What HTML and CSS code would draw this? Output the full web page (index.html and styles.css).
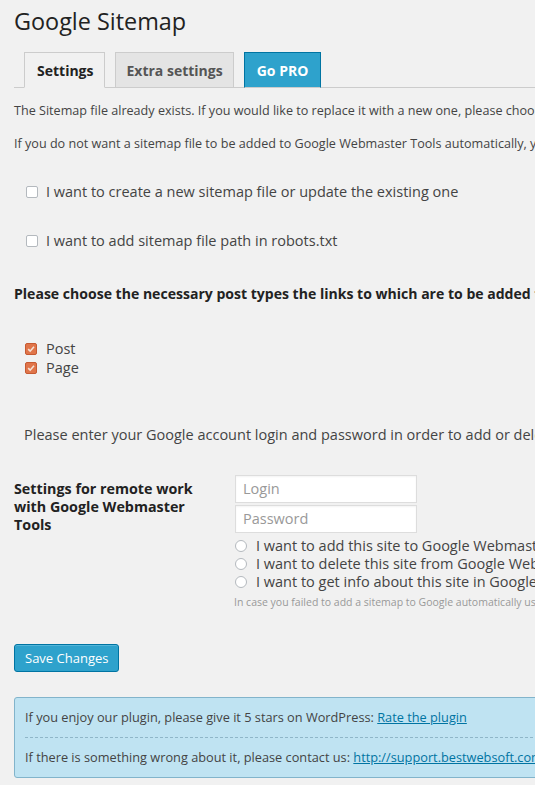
FILE: index.html
```html
<!DOCTYPE html>
<html>
<head>
<meta charset="utf-8">
<link rel="stylesheet" href="styles.css">
</head>
<body>
<div class="wrap">
  <h1 class="title">Google Sitemap</h1>
  <div class="tabs">
    <span class="tab tab-active">Settings</span>
    <span class="tab tab-extra">Extra settings</span>
    <span class="tab tab-pro">Go PRO</span>
  </div>
  <p class="msg msg-first">The Sitemap file already exists. If you would like to replace it with a new one, please choose the necessary box below.</p>
  <p class="msg">If you do not want a sitemap file to be added to Google Webmaster Tools automatically, you can do it using this link.</p>

  <div class="opt opt-first"><span class="cb"></span><span>I want to create a new sitemap file or update the existing one</span></div>
  <div class="opt opt-second"><span class="cb"></span><span>I want to add sitemap file path in robots.txt</span></div>

  <h3 class="heading">Please choose the necessary post types the links to which are to be added to the sitemap:</h3>

  <div class="types">
    <div class="type"><span class="cb cb-on"><svg width="12" height="12" viewBox="0 0 12 12"><path d="M2.6 6.2 L5 8.6 L9.6 3.2" fill="none" stroke="#f6e2d6" stroke-width="1.9"/></svg></span><span>Post</span></div>
    <div class="type"><span class="cb cb-on"><svg width="12" height="12" viewBox="0 0 12 12"><path d="M2.6 6.2 L5 8.6 L9.6 3.2" fill="none" stroke="#f6e2d6" stroke-width="1.9"/></svg></span><span>Page</span></div>
  </div>

  <p class="enter">Please enter your Google account login and password in order to add or delete the site and sitemap file.</p>

  <div class="remote">
    <div class="remote-label">Settings for remote work with Google Webmaster Tools</div>
    <div class="remote-fields">
      <div class="field">Login</div>
      <div class="field">Password</div>
      <div class="radio-row"><span class="rd"></span><span>I want to add this site to Google Webmaster Tools</span></div>
      <div class="radio-row"><span class="rd"></span><span>I want to delete this site from Google Webmaster Tools</span></div>
      <div class="radio-row"><span class="rd"></span><span>I want to get info about this site in Google Webmaster Tools</span></div>
      <div class="note">In case you failed to add a sitemap to Google automatically using this plugin, it is possible to do it manually.</div>
    </div>
  </div>

  <div class="save-row"><span class="save">Save Changes</span></div>

  <div class="info">
    <div class="info-line info-top">If you enjoy our plugin, please give it 5 stars on WordPress: <a href="#">Rate the plugin</a></div>
    <div class="info-line">If there is something wrong about it, please contact us: <a href="#">http://support.bestwebsoft.com</a></div>
  </div>
</div>
</body>
</html>
```

FILE: styles.css
```css
html, body {
  margin: 0;
  padding: 0;
  background: #f1f1f1;
  overflow: hidden;
}
body {
  font-family: "Open Sans", "DejaVu Sans", sans-serif;
  color: #444;
  width: 535px;
  height: 785px;
}
.wrap {
  padding-left: 14px;
  width: 900px;
  white-space: nowrap;
}
.title {
  margin: 0;
  padding-top: 7px;
  font-size: 23.4px;
  font-weight: 400;
  line-height: 29px;
  color: #222;
}
.tabs {
  margin-top: 16px;
  padding-left: 10px;
  border-bottom: 1px solid #ccc;
  display: flex;
  gap: 10px;
  height: 35px;
  align-items: flex-end;
}
.tab {
  box-sizing: border-box;
  height: 36px;
  margin-bottom: -1px;
  padding: 0 10px;
  border: 1px solid #ccc;
  border-bottom: none;
  font-size: 14px;
  font-weight: 700;
  line-height: 36px;
  color: #222;
}
.tab-active {
  background: #f1f1f1;
  border-bottom: 1px solid #f1f1f1;
  padding: 0 11px 0 12px;
}
.tab-extra {
  background: #e4e4e4;
  color: #555;
  border-bottom: 1px solid #ccc;
}
.tab-pro {
  background: #2ea2cc;
  border-color: #0074a2;
  color: #fff;
  padding: 0 12px;
  border-bottom: 1px solid #ccc;
}
.msg {
  margin: 0;
  font-size: 12.6px;
  line-height: 18px;
}
.msg-first {
  margin-top: 14px;
  margin-bottom: 15px;
}
.opt {
  display: flex;
  align-items: center;
  font-size: 14.5px;
  line-height: 20px;
  padding-left: 12px;
}
.opt-first { margin-top: 29px; }
.opt-second { margin-top: 29px; }
.cb {
  box-sizing: border-box;
  width: 12px;
  height: 12px;
  border: 1px solid #b4b9be;
  border-radius: 2px;
  background: #fff;
  margin-right: 8px;
  display: inline-flex;
  align-items: center;
  justify-content: center;
  flex: none;
}
.cb-on {
  background: #e0754a;
  border-color: #c65a32;
}
.cb-on svg { display: block; }
.heading {
  margin: 0;
  margin-top: 33px;
  font-size: 14.05px;
  font-weight: 700;
  line-height: 20px;
  color: #222;
}
.types {
  margin-top: 35px;
  padding-left: 11px;
}
.type {
  display: flex;
  align-items: center;
  font-size: 14.5px;
  line-height: 19px;
}
.type .cb { margin-right: 9px; }
.enter {
  margin: 0;
  margin-top: 48px;
  padding-left: 10px;
  font-size: 14.5px;
  line-height: 20px;
}
.remote {
  margin-top: 30px;
  display: flex;
}
.remote-label {
  width: 190px;
  white-space: normal;
  margin-top: 5px;
  margin-right: 31px;
  font-size: 14.3px;
  font-weight: 700;
  line-height: 18px;
  color: #222;
}
.remote-fields {
  display: flex;
  flex-direction: column;
}
.field {
  box-sizing: border-box;
  width: 182px;
  height: 28px;
  margin-bottom: 2px;
  padding-left: 7px;
  background: #fff;
  border: 1px solid #ddd;
  box-shadow: inset 0 1px 2px rgba(0,0,0,0.05);
  font-size: 14.5px;
  line-height: 26px;
  color: #999;
}
.radio-row {
  display: flex;
  align-items: center;
  font-size: 14.5px;
  line-height: 18px;
}
.field + .radio-row { margin-top: 2px; }
.rd {
  box-sizing: border-box;
  width: 12px;
  height: 12px;
  border: 1px solid #b4b9be;
  border-radius: 50%;
  background: #fff;
  margin-right: 9px;
  flex: none;
}
.note {
  margin-top: 4px;
  margin-left: -1px;
  font-size: 10.5px;
  line-height: 14px;
  color: #999;
}
.save-row {
  margin-top: 35px;
}
.save {
  display: inline-block;
  box-sizing: border-box;
  height: 28px;
  padding: 0 10px;
  background: #2ea2cc;
  border: 1px solid #0074a2;
  border-radius: 3px;
  box-shadow: inset 0 1px 0 rgba(120,200,230,0.5);
  color: #fff;
  font-size: 13px;
  line-height: 26px;
}
.info {
  margin-top: 25px;
  box-sizing: border-box;
  width: 700px;
  background: #bfe3f2;
  border: 1px solid #82b4cb;
  border-radius: 3px;
  padding: 0 10px;
}
.info-line {
  font-size: 12.75px;
  line-height: 39px;
  color: #444;
}
.info-top {
  border-bottom: 1px dashed #8fb6c8;
}
.info a {
  color: #0074a2;
  text-decoration: underline;
}
```
